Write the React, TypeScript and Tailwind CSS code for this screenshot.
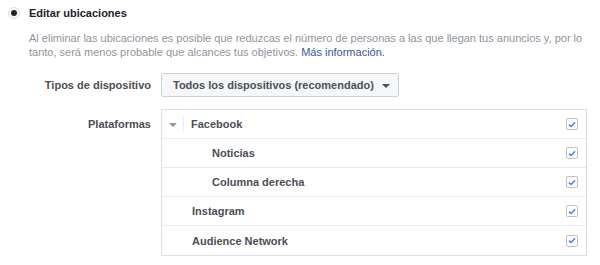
import React from "react";

const Check = () => (
  <div className="w-[12px] h-[12px] border border-[#bec2c9] rounded-[2px] bg-white flex items-center justify-center">
    <svg width="8" height="7" viewBox="0 0 9 8">
      <path d="M1 4.2 L3.4 6.3 L8 1.3" fill="none" stroke="#4080ff" strokeWidth="1.7" />
    </svg>
  </div>
);

const Caret = ({ color = "#4b4f56", w = 8 }: { color?: string; w?: number }) => (
  <svg width={w} height={w / 2} viewBox="0 0 8 4" className="block">
    <path d="M0 0 L8 0 L4 4 Z" fill={color} />
  </svg>
);

const Row = ({ children, last }: { children: React.ReactNode; last?: boolean }) => (
  <div className={`h-[29px] flex items-center justify-between pr-[8px] ${last ? "" : "border-b border-[#e9ebee]"}`}>
    {children}
    <Check />
  </div>
);

export default function App() {
  return (
    <div className="w-[600px] h-[265px] bg-white font-['Liberation_Sans',Arial,sans-serif] text-[11px] leading-[14px] pt-[5px]">
      <div className="flex items-center pl-[8px] h-[15px]">
        <div className="w-[12px] h-[12px] rounded-full border border-[#dddfe2] bg-[#f6f7f9] flex items-center justify-center">
          <div className="w-[6px] h-[6px] rounded-full bg-[#1d2129]" />
        </div>
        <span className="ml-[9px] font-bold text-[#1d2129]">Editar ubicaciones</span>
      </div>
      <p className="pl-[29px] pr-[10px] mt-[11px] leading-[14px] text-[#90949c]">
        Al eliminar las ubicaciones es posible que reduzcas el número de personas a las que llegan tus anuncios y, por lo tanto, será menos probable que alcances tus objetivos.{" "}
        <span className="text-[#365899]">Más información.</span>
      </p>
      <div className="flex mt-[14px]">
        <div className="w-[151px] h-[24px] flex items-center justify-end font-bold text-[#4b4f56] whitespace-nowrap">Tipos de dispositivo</div>
        <div className="ml-[10px] w-[238px] h-[24px] border border-[#ced0d4] rounded-[2px] bg-[#f6f7f9] flex items-center pl-[11px] font-bold text-[#4b4f56] whitespace-nowrap">
          <span>Todos los dispositivos (recomendado)</span>
          <span className="ml-[8px] mt-[1px]"><Caret /></span>
        </div>
      </div>
      <div className="flex mt-[12px]">
        <div className="w-[151px] h-[29px] flex items-center justify-end font-bold text-[#4b4f56]">Plataformas</div>
        <div className="ml-[10px] w-[426px] border border-[#dddfe2] font-bold text-[#4b4f56]">
          <Row>
            <div className="flex items-center">
              <span className="ml-[7px] mt-[1px]"><Caret color="#90949c" w={8} /></span>
              <div className="ml-[6px] w-px h-[16px] bg-[#e9ebee]" />
              <span className="ml-[7px]">Facebook</span>
            </div>
          </Row>
          <Row><span className="pl-[50px]">Noticias</span></Row>
          <Row><span className="pl-[50px]">Columna derecha</span></Row>
          <Row><span className="pl-[30px]">Instagram</span></Row>
          <Row last><span className="pl-[30px]">Audience Network</span></Row>
        </div>
      </div>
    </div>
  );
}
